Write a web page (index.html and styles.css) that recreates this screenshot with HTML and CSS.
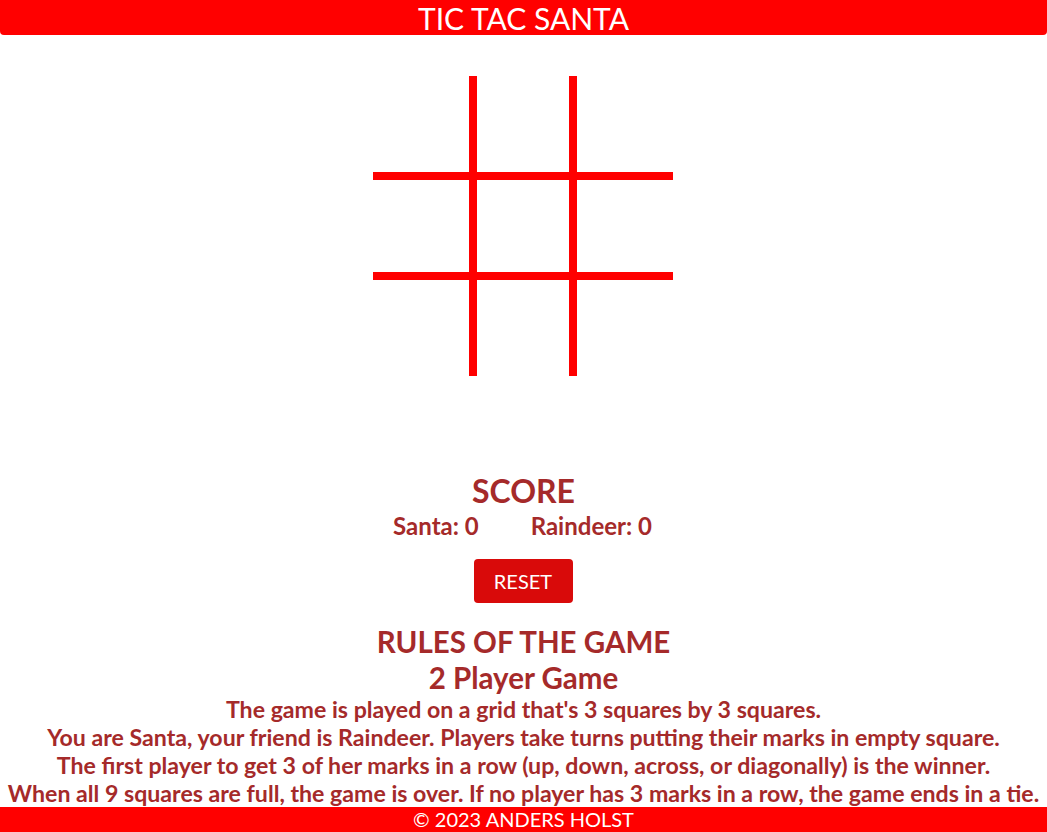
FILE: index.html
```html
<!DOCTYPE html>
<html lang="en">
<head>
<meta charset="utf-8">
<title>Tic Tac Santa</title>
<link rel="stylesheet" href="styles.css">
</head>
<body>
<header class="top">TIC TAC SANTA</header>
<main class="main">
  <div class="board">
    <div class="cell c1"></div><div class="cell c2"></div><div class="cell c3"></div>
    <div class="cell c4"></div><div class="cell c5"></div><div class="cell c6"></div>
    <div class="cell c7"></div><div class="cell c8"></div><div class="cell c9"></div>
  </div>
  <section class="score">
    <h2 class="heading big">SCORE</h2>
    <div class="score-row"><span>Santa: 0</span><span>Raindeer: 0</span></div>
    <button class="reset">RESET</button>
  </section>
  <section class="rules">
    <h2 class="heading">RULES OF THE GAME</h2>
    <h2 class="heading sub">2 Player Game</h2>
    <p class="rule">The game is played on a grid that's 3 squares by 3 squares.</p>
    <p class="rule">You are Santa, your friend is Raindeer. Players take turns putting their marks in empty square.</p>
    <p class="rule">The first player to get 3 of her marks in a row (up, down, across, or diagonally) is the winner.</p>
    <p class="rule">When all 9 squares are full, the game is over. If no player has 3 marks in a row, the game ends in a tie.</p>
  </section>
</main>
<footer class="bottom">© 2023 ANDERS HOLST</footer>
</body>
</html>
```
FILE: styles.css
```css
* { box-sizing: border-box; }
html, body { margin: 0; padding: 0; }
body {
  font-family: Lato, "Liberation Sans", sans-serif;
  color: #a52a2a;
  background: #fff;
  text-align: center;
}
.top {
  background: #ff0000;
  color: #fff;
  height: 35px;
  line-height: 36px;
  font-size: 30px;
  border-radius: 0 0 4px 4px;
}
.main {
  display: flex;
  flex-direction: column;
  align-items: center;
}
.board {
  margin-top: 41px;
  margin-right: 1px;
  display: grid;
  grid-template-columns: repeat(3, 100px);
  grid-template-rows: repeat(3, 100px);
}
.cell { border: 0 solid #ff0000; }
.c1 { border-right-width: 4px; border-bottom-width: 4px; }
.c2 { border-left-width: 4px; border-right-width: 4px; border-bottom-width: 4px; }
.c3 { border-left-width: 4px; border-bottom-width: 4px; }
.c4 { border-right-width: 4px; border-top-width: 4px; border-bottom-width: 4px; }
.c5 { border-width: 4px; }
.c6 { border-left-width: 4px; border-top-width: 4px; border-bottom-width: 4px; }
.c7 { border-right-width: 4px; border-top-width: 4px; }
.c8 { border-left-width: 4px; border-right-width: 4px; border-top-width: 4px; }
.c9 { border-left-width: 4px; border-top-width: 4px; }
.score {
  margin-top: 98px;
  display: flex;
  flex-direction: column;
  align-items: center;
}
.heading {
  margin: 0;
  font-size: 29.5px;
  font-weight: 700;
  line-height: 34px;
}
.big { font-size: 32px; }
.score-row {
  margin-top: 3px;
  margin-right: 2px;
  display: flex;
  gap: 52px;
  font-size: 24px;
  font-weight: 700;
  line-height: 30px;
}
.reset {
  margin-top: 18px;
  margin-right: 1px;
  width: 99px;
  height: 44px;
  background: #d90a0a;
  color: #fff;
  border: none;
  border-radius: 4px;
  font-family: Lato, "Liberation Sans", sans-serif;
  font-size: 20px;
}
.rules {
  margin-top: 22px;
}
.sub { margin-top: 2px; }
.rule {
  margin: 0;
  font-size: 23.15px;
  font-weight: 700;
  line-height: 28px;
}
.bottom {
  background: #ff0000;
  color: #fff;
  font-size: 20px;
  height: 25px;
  line-height: 25px;
}
```
